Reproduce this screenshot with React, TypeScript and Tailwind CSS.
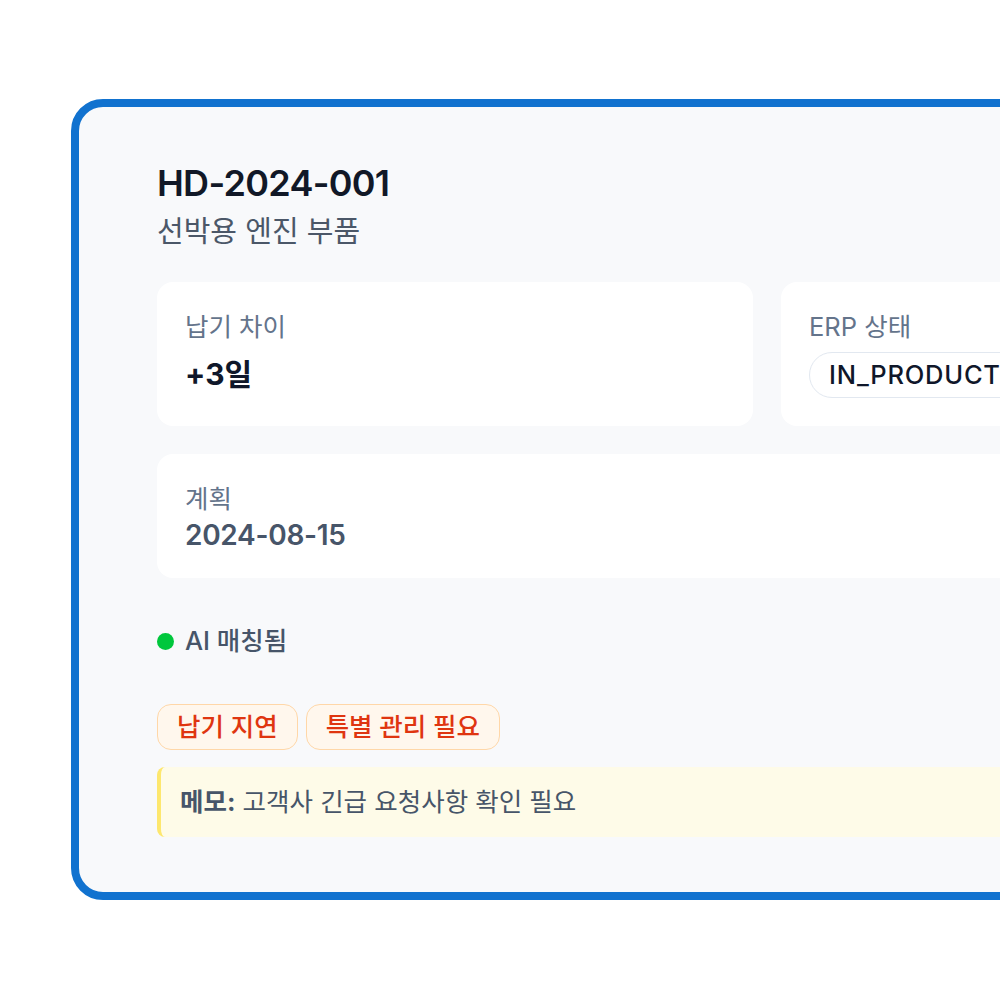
import React from "react";

export default function App() {
  return (
    <div
      className="w-[1000px] h-[1000px] overflow-hidden bg-white pt-[99px] pl-[71px]"
      style={{ fontFamily: 'Inter, "Noto Sans CJK KR", "Noto Sans", sans-serif' }}
    >
      <div className="w-[1392px] rounded-[32px] border-[8px] border-[#1172cf] bg-[#f8f9fb] px-[78px] pt-[54px] pb-[55px]">
        <div className="text-[36px] leading-[44px] font-semibold tracking-[-0.02em] text-[#111827]">HD-2024-001</div>
        <div className="mt-[7px] text-[29px] leading-[40px] text-[#4b5768]">선박용 엔진 부품</div>

        <div className="mt-[30px] grid grid-cols-2 gap-[28px]">
          <div className="rounded-2xl bg-white p-[28px]">
            <div className="text-[25.5px] leading-[34px] text-[#64748b]">납기 차이</div>
            <div className="mt-[8px] text-[30px] leading-[44px] font-bold text-[#0f172a]">+3일</div>
          </div>
          <div className="rounded-2xl bg-white p-[28px]">
            <div className="text-[25.5px] leading-[34px] text-[#64748b]">ERP 상태</div>
            <div className="mt-[8px] inline-flex rounded-full border border-[#e2e8f0] bg-white px-[19px] py-[5px] text-[25.5px] leading-[34px] font-medium tracking-[0.03em] text-[#0f172a]">
              IN_PRODUCTION
            </div>
          </div>
          <div className="col-span-2 rounded-2xl bg-white p-[28px]">
            <div className="text-[25.5px] leading-[34px] text-[#64748b]">계획</div>
            <div className="mt-[4px] text-[28px] leading-[30px] font-semibold tracking-[-0.01em] text-[#475569]">2024-08-15</div>
          </div>
        </div>

        <div className="mt-[46px] flex items-center gap-[11px]">
          <span className="h-[17px] w-[17px] rounded-full bg-[#00c73c]" />
          <span className="text-[25.5px] leading-[34px] font-medium text-[#475569]">AI 매칭됨</span>
        </div>

        <div className="mt-[46px] flex gap-[8px]">
          <span className="rounded-[14px] border border-orange-200 bg-orange-50 px-[19px] py-[5px] text-[25.5px] leading-[34px] font-medium text-[#df3510]">
            납기 지연
          </span>
          <span className="rounded-[14px] border border-orange-200 bg-orange-50 px-[19px] py-[5px] text-[25.5px] leading-[34px] font-medium text-[#df3510]">
            특별 관리 필요
          </span>
        </div>

        <div className="mt-[17px] rounded-lg border-l-4 border-[#fde76e] bg-[#fefbe8] px-[19px] py-[18px] text-[25.5px] leading-[34px] text-[#475569]">
          <span className="font-bold">메모:</span> 고객사 긴급 요청사항 확인 필요
        </div>
      </div>
    </div>
  );
}
